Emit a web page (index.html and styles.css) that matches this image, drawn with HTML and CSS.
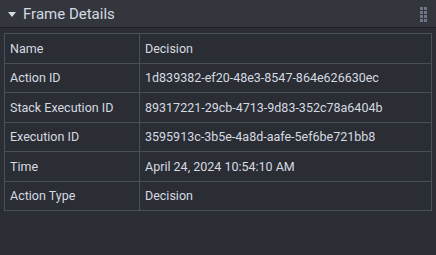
FILE: index.html
```html
<!DOCTYPE html>
<html lang="en">
<head>
    <meta charset="UTF-8">
    <title>Frame Details</title>
    <link rel="stylesheet" href="styles.css">
</head>
<body>
    <div class="panel">
        <header class="panel-header">
            <span class="caret"></span>
            <h1 class="panel-title">Frame Details</h1>
            <span class="handle">
                <i></i><i></i><i></i><i></i><i></i><i></i><i></i><i></i>
            </span>
        </header>
        <div class="panel-body">
            <table class="details">
                <tr><td class="key">Name</td><td>Decision</td></tr>
                <tr><td class="key">Action ID</td><td>1d839382-ef20-48e3-8547-864e626630ec</td></tr>
                <tr><td class="key">Stack Execution ID</td><td>89317221-29cb-4713-9d83-352c78a6404b</td></tr>
                <tr><td class="key">Execution ID</td><td>3595913c-3b5e-4a8d-aafe-5ef6be721bb8</td></tr>
                <tr><td class="key">Time</td><td>April 24, 2024 10:54:10 AM</td></tr>
                <tr><td class="key">Action Type</td><td>Decision</td></tr>
            </table>
        </div>
    </div>
</body>
</html>
```

FILE: styles.css
```css
* {
    margin: 0;
    padding: 0;
    box-sizing: border-box;
}

body {
    background-color: #2a2d33;
    font-family: Roboto, sans-serif;
    color: #d6dae2;
    width: 436px;
    height: 255px;
    overflow: hidden;
}

.panel-header {
    height: 28px;
    background-color: #33373d;
    border-bottom: 1px solid #1d1f23;
    display: flex;
    align-items: center;
    padding: 0 8px 0 8px;
}

.caret {
    width: 0;
    height: 0;
    border-left: 4px solid transparent;
    border-right: 4px solid transparent;
    border-top: 5px solid #d6dae2;
    margin-right: 7px;
    margin-top: 1px;
}

.panel-title {
    font-size: 15px;
    font-weight: 400;
    color: #d4dae4;
    flex: 1;
}

.handle {
    display: grid;
    grid-template-columns: 3px 3px;
    grid-auto-rows: 3px;
    gap: 1px;
    margin-right: 1px;
    margin-top: 1px;
}

.handle i {
    background-color: #6f7585;
}

.panel-body {
    padding: 5px 4px;
}

.details {
    width: 428px;
    border-collapse: collapse;
    border: 1px solid #4a4f5c;
}

.details td {
    border: 1px solid #4a4f5c;
    height: 29.5px;
    padding: 0 5px;
    font-size: 12.5px;
    color: #d6dae2;
    vertical-align: middle;
}

.details td.key {
    width: 135px;
}
```
